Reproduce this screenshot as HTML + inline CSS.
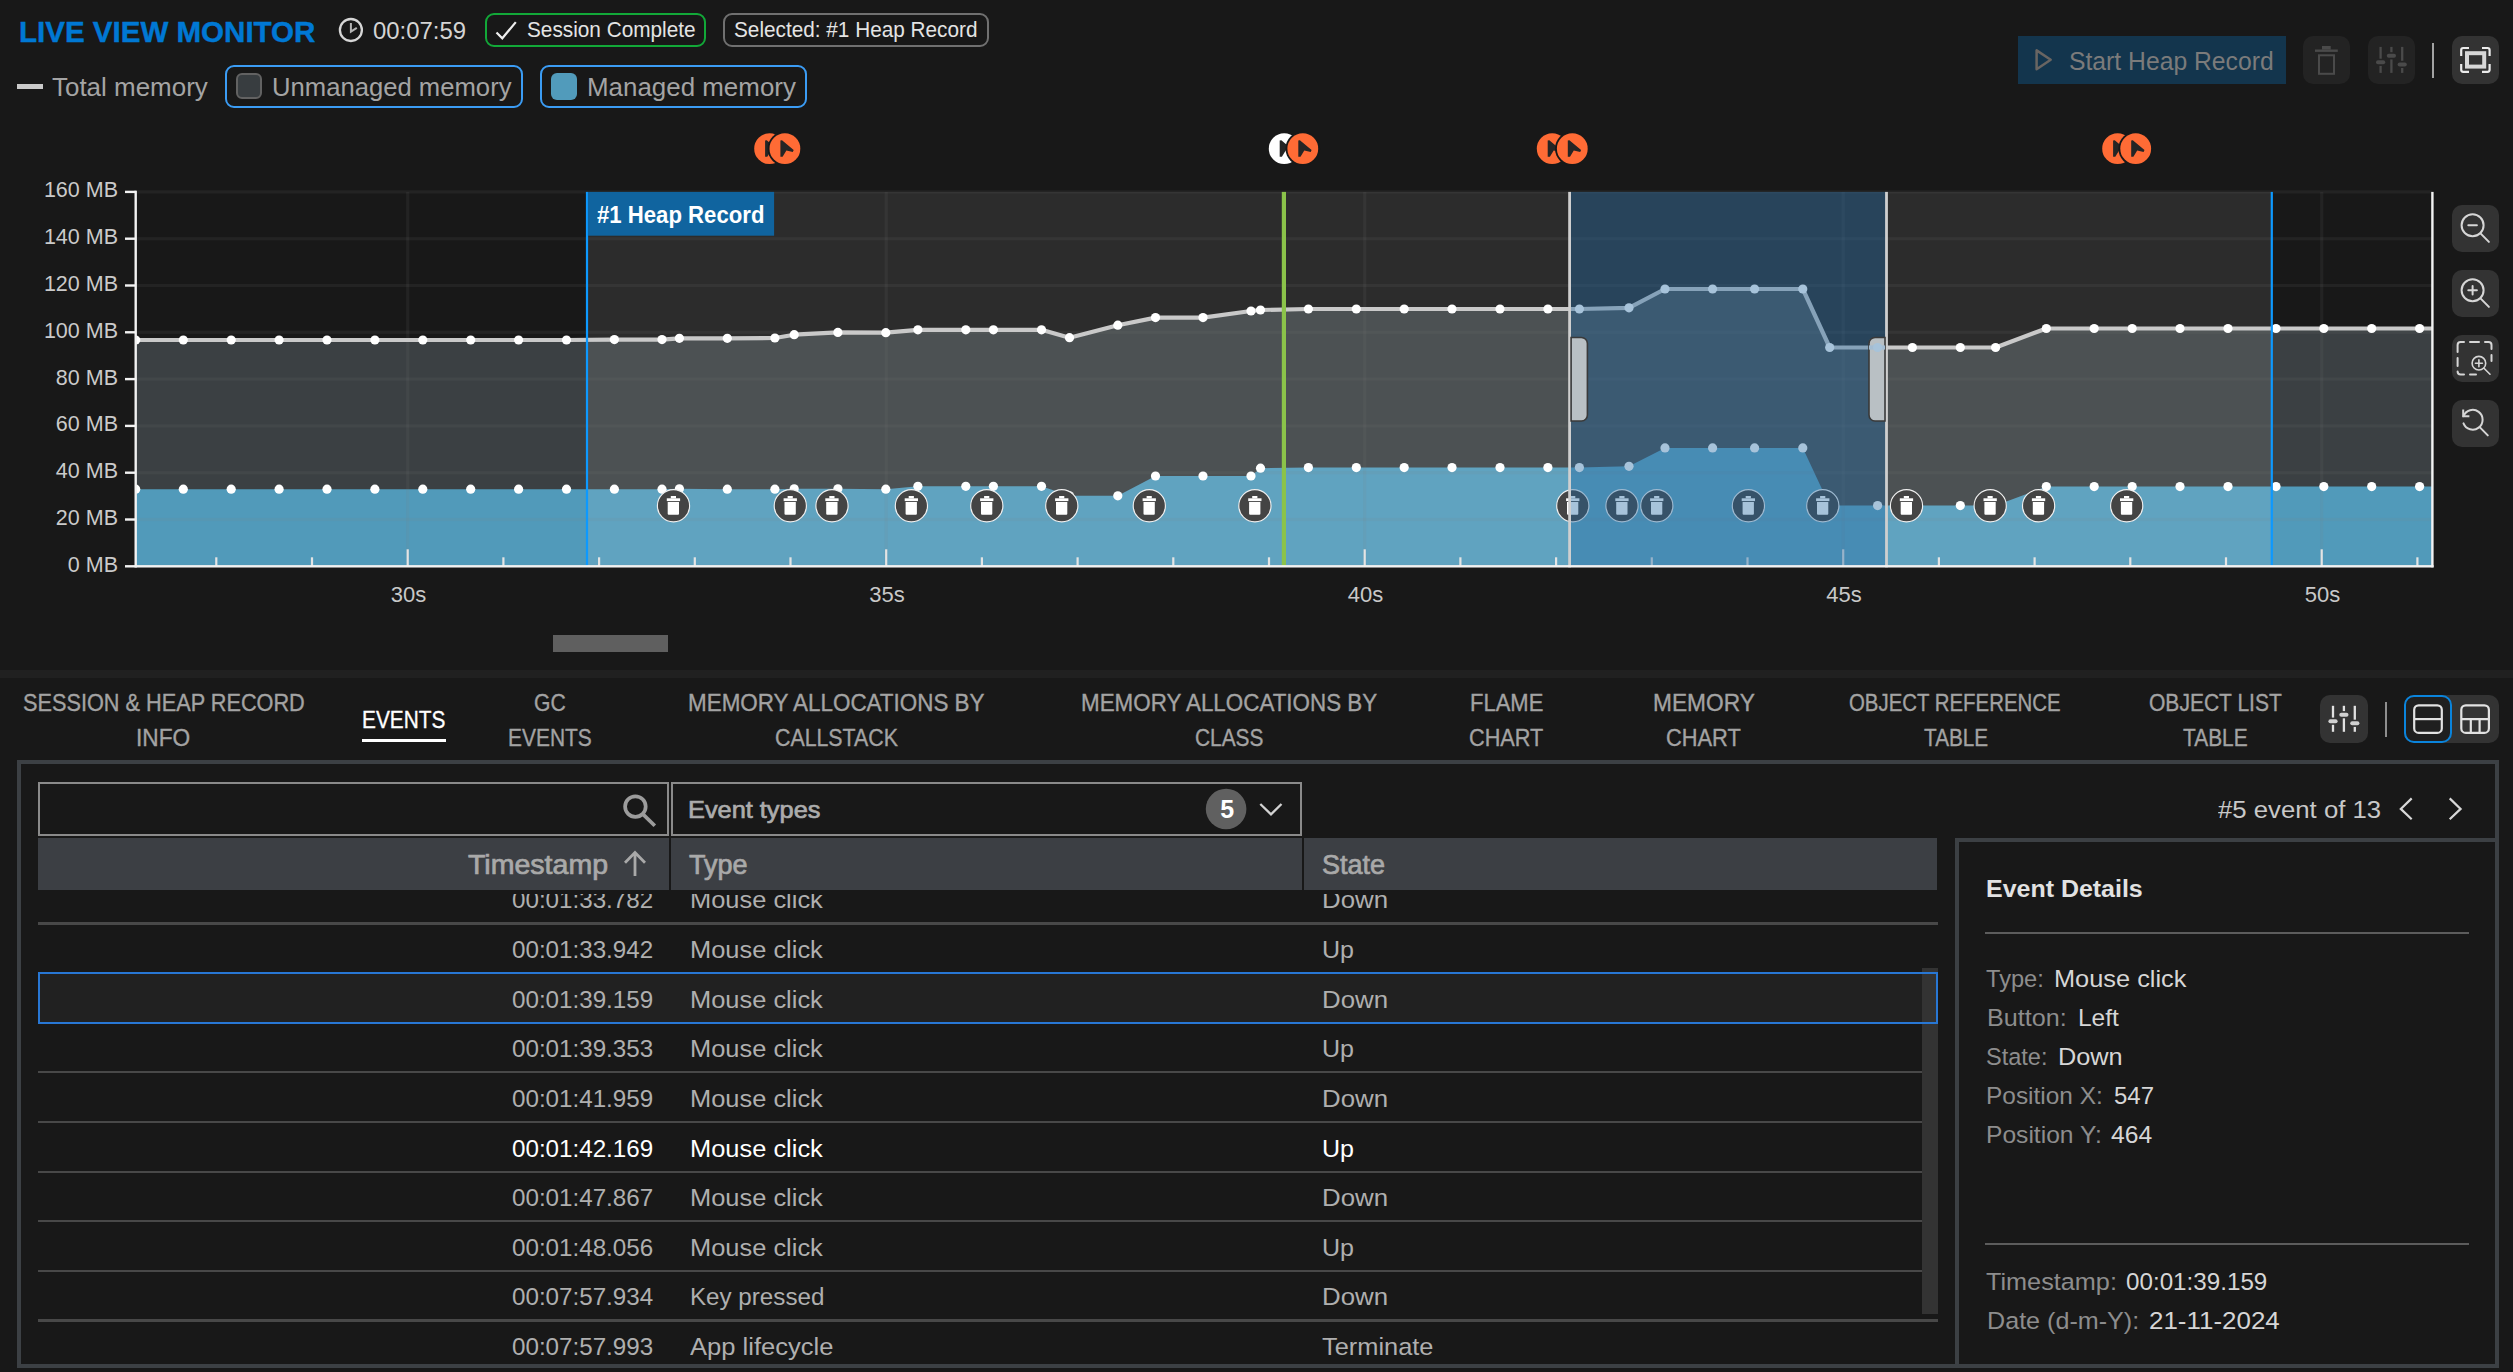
<!DOCTYPE html>
<html><head><meta charset="utf-8"><title>Live View Monitor</title>
<style>
html,body{margin:0;padding:0;background:#181818;}
body{width:2513px;height:1372px;position:relative;overflow:hidden;font-family:"Liberation Sans",sans-serif;}
.t{position:absolute;white-space:nowrap;transform-origin:0 0;}
.b{position:absolute;box-sizing:border-box;}
svg{position:absolute;left:0;top:0;overflow:visible;}
</style></head><body>
<span class="t" style="left:18.90px;top:14.21px;font-size:29.4px;line-height:35px;color:#0078d4;transform:scaleX(1.0047);font-weight:bold;-webkit-text-stroke:0.45px #0078d4;">LIVE VIEW MONITOR</span>
<svg width="2513" height="130"><g fill="none"><circle cx="350.9" cy="30" r="11" stroke="#d6d6d6" stroke-width="2.3"/><path d="M350.9 22.9V31.7L356.8 27.9" stroke="#b4b4b4" stroke-width="2"/></g></svg>
<span class="t" style="left:373.20px;top:16.24px;font-size:24.7px;line-height:30px;color:#d4d4d4;transform:scaleX(0.9682);">00:07:59</span>
<div class="b" style="left:485.2px;top:13.0px;width:221.0px;height:34.0px;background:transparent;border:2.4px solid #12a838;border-radius:9px;"></div>
<svg width="2513" height="130"><path d="M496.5 32.5L502.3 38.3L515.8 22.1" fill="none" stroke="#eeeeee" stroke-width="2.2"/></svg>
<span class="t" style="left:526.60px;top:17.22px;font-size:21.6px;line-height:26px;color:#e4e4e4;transform:scaleX(0.9619);">Session Complete</span>
<div class="b" style="left:723.0px;top:13.0px;width:266.0px;height:34.0px;background:transparent;border:2.4px solid #707070;border-radius:9px;"></div>
<span class="t" style="left:734.10px;top:17.22px;font-size:21.6px;line-height:26px;color:#e4e4e4;transform:scaleX(0.9611);">Selected: #1 Heap Record</span>
<div class="b" style="left:17.0px;top:83.7px;width:26.4px;height:5.0px;background:#cacaca;"></div>
<span class="t" style="left:52.00px;top:72.23px;font-size:25.3px;line-height:30px;color:#a4a4a4;transform:scaleX(1.0260);">Total memory</span>
<div class="b" style="left:225.0px;top:65.0px;width:298.0px;height:43.0px;background:transparent;border:2.4px solid #3b9cf4;border-radius:9px;"></div>
<div class="b" style="left:236.0px;top:73.0px;width:26.0px;height:26.0px;background:#383d40;border:2px solid #626262;border-radius:6px;"></div>
<span class="t" style="left:271.90px;top:72.23px;font-size:25.3px;line-height:30px;color:#a4a4a4;transform:scaleX(1.0139);">Unmanaged memory</span>
<div class="b" style="left:540.0px;top:65.0px;width:267.3px;height:43.0px;background:transparent;border:2.4px solid #3b9cf4;border-radius:9px;"></div>
<div class="b" style="left:550.5px;top:73.0px;width:26.5px;height:26.5px;background:#519bbb;border-radius:6px;"></div>
<span class="t" style="left:586.60px;top:72.23px;font-size:25.3px;line-height:30px;color:#a4a4a4;transform:scaleX(1.0246);">Managed memory</span>
<div class="b" style="left:2017.8px;top:36.0px;width:268.2px;height:48.0px;background:#13354d;"></div>
<svg width="2513" height="130"><path d="M2036.6 50.4V69.2L2050.7 59.8Z" fill="none" stroke="#696562" stroke-width="2.5" stroke-linejoin="round"/></svg>
<span class="t" style="left:2068.60px;top:46.14px;font-size:25px;line-height:30px;color:#7b7b7b;transform:scaleX(0.9887);">Start Heap Record</span>
<div class="b" style="left:2303.0px;top:36.0px;width:47.0px;height:48.0px;background:#232323;border-radius:10px;"></div>
<svg width="2513" height="130"><g fill="none" stroke="#4a4a4a" stroke-width="2"><rect x="2319" y="55.3" width="15" height="18.5"/></g><rect x="2322" y="46" width="8.7" height="3.6" fill="#4a4a4a"/><rect x="2315" y="49.5" width="22.8" height="2.4" fill="#4a4a4a"/></svg>
<div class="b" style="left:2368.0px;top:36.0px;width:47.0px;height:48.0px;background:#232323;border-radius:10px;"></div>
<svg width="2513" height="130"><g><rect x="2379.45" y="46.90" width="2.3" height="11.80" fill="#4a4a4a"/><rect x="2379.45" y="65.90" width="2.3" height="7.00" fill="#4a4a4a"/><rect x="2376.00" y="60.30" width="9.2" height="4" rx="2" fill="#4a4a4a"/><rect x="2390.25" y="46.90" width="2.3" height="5.30" fill="#4a4a4a"/><rect x="2390.25" y="59.40" width="2.3" height="13.50" fill="#4a4a4a"/><rect x="2386.80" y="53.80" width="9.2" height="4" rx="2" fill="#4a4a4a"/><rect x="2401.05" y="46.90" width="2.3" height="13.90" fill="#4a4a4a"/><rect x="2401.05" y="68.00" width="2.3" height="4.90" fill="#4a4a4a"/><rect x="2397.60" y="62.40" width="9.2" height="4" rx="2" fill="#4a4a4a"/></g></svg>
<div class="b" style="left:2431.7px;top:43.0px;width:2.4px;height:35.0px;background:#a2a2a2;"></div>
<div class="b" style="left:2452.0px;top:36.0px;width:47.0px;height:48.0px;background:#333333;border-radius:10px;"></div>
<svg width="2513" height="130"><g fill="none" stroke="#ececec" stroke-width="2.2" stroke-linecap="butt"><path d="M2461.2 56V50a2 2 0 0 1 2-2H2469"/><path d="M2482 48H2487.6a2 2 0 0 1 2 2V56"/><path d="M2461.2 64V69.8a2 2 0 0 0 2 2H2469"/><path d="M2482 71.8H2487.6a2 2 0 0 0 2-2V64"/></g><rect x="2467" y="53.2" width="17.2" height="13.4" fill="none" stroke="#d8d8d8" stroke-width="4"/></svg>
<svg width="2513" height="672" viewBox="0 0 2513 672"><defs><clipPath id="cp"><rect x="135.7" y="185.89999999999998" width="2296.7000000000003" height="380.4"/></clipPath></defs><polygon points="135.7,340.0 183.3,340.0 231.2,340.0 279.1,340.0 327.0,340.0 374.9,340.0 422.8,340.0 470.7,340.0 518.6,340.0 566.5,340.0 614.4,339.6 662.0,339.6 679.4,338.3 727.3,338.3 774.9,338.0 794.2,334.7 837.9,332.4 885.8,332.7 917.9,329.8 965.8,329.8 993.4,329.8 1041.5,329.8 1069.5,337.7 1117.8,325.2 1155.5,317.6 1203.0,317.6 1251.0,311.0 1260.5,310.0 1308.4,309.0 1356.3,309.0 1404.2,309.0 1452.0,309.0 1500.0,309.0 1547.9,309.0 1579.4,309.0 1629.0,307.8 1665.0,289.0 1712.6,289.0 1754.6,289.0 1802.8,289.0 1829.7,347.5 1877.6,347.5 1912.4,347.5 1960.3,347.5 1995.6,347.5 2046.3,328.5 2094.2,328.5 2132.2,328.5 2180.0,328.5 2228.0,328.5 2276.0,328.5 2323.8,328.5 2371.7,328.5 2419.6,328.5 2432.4,328.5 2432.4,566.3 135.7,566.3" fill="#3b4043"/><polygon points="135.7,489.2 183.3,489.2 231.2,489.2 279.1,489.2 327.0,489.2 374.9,489.2 422.8,489.2 470.7,489.2 518.6,489.2 566.5,489.2 614.4,489.2 662.0,489.2 679.4,488.8 727.3,489.2 774.9,489.2 794.2,488.8 837.9,488.8 885.8,489.2 917.9,486.3 965.8,486.3 993.4,486.3 1041.5,486.3 1069.5,495.8 1117.8,495.8 1155.5,476.0 1203.0,476.0 1251.0,476.0 1260.5,468.2 1308.4,467.6 1356.3,467.6 1404.2,467.6 1452.0,467.6 1500.0,467.6 1547.9,467.6 1579.4,467.6 1629.0,466.3 1665.0,447.9 1712.6,447.9 1754.6,447.9 1802.8,447.9 1829.7,505.6 1877.6,505.6 1912.4,505.6 1960.3,505.6 1995.6,505.6 2046.3,486.6 2094.2,486.6 2132.2,486.6 2180.0,486.6 2228.0,486.6 2276.0,486.6 2323.8,486.6 2371.7,486.6 2419.6,486.6 2432.4,486.6 2432.4,566.3 135.7,566.3" fill="#519aba"/><rect x="586.9" y="191.89999999999998" width="1684.7999999999997" height="374.4" fill="rgba(255,255,255,0.09)"/><g fill="rgba(130,130,130,0.11)"><rect x="135.7" y="564.7" width="2296.7000000000003" height="3.2"/><rect x="135.7" y="517.9" width="2296.7000000000003" height="3.2"/><rect x="135.7" y="471.1" width="2296.7000000000003" height="3.2"/><rect x="135.7" y="424.3" width="2296.7000000000003" height="3.2"/><rect x="135.7" y="377.5" width="2296.7000000000003" height="3.2"/><rect x="135.7" y="330.7" width="2296.7000000000003" height="3.2"/><rect x="135.7" y="283.9" width="2296.7000000000003" height="3.2"/><rect x="135.7" y="237.1" width="2296.7000000000003" height="3.2"/><rect x="135.7" y="190.3" width="2296.7000000000003" height="3.2"/><rect x="406.1" y="191.89999999999998" width="3.2" height="374.4"/><rect x="884.6" y="191.89999999999998" width="3.2" height="374.4"/><rect x="1363.1" y="191.89999999999998" width="3.2" height="374.4"/><rect x="1841.6" y="191.89999999999998" width="3.2" height="374.4"/><rect x="2320.1" y="191.89999999999998" width="3.2" height="374.4"/></g><g fill="#e4e4e4"><rect x="215.2" y="557.3" width="2.2" height="9"/><rect x="310.9" y="557.3" width="2.2" height="9"/><rect x="406.6" y="549.3" width="2.2" height="17"/><rect x="502.3" y="557.3" width="2.2" height="9"/><rect x="598.0" y="557.3" width="2.2" height="9"/><rect x="693.7" y="557.3" width="2.2" height="9"/><rect x="789.4" y="557.3" width="2.2" height="9"/><rect x="885.1" y="549.3" width="2.2" height="17"/><rect x="980.8" y="557.3" width="2.2" height="9"/><rect x="1076.5" y="557.3" width="2.2" height="9"/><rect x="1172.2" y="557.3" width="2.2" height="9"/><rect x="1267.9" y="557.3" width="2.2" height="9"/><rect x="1363.6" y="549.3" width="2.2" height="17"/><rect x="1459.3" y="557.3" width="2.2" height="9"/><rect x="1555.0" y="557.3" width="2.2" height="9"/><rect x="1650.7" y="557.3" width="2.2" height="9"/><rect x="1746.4" y="557.3" width="2.2" height="9"/><rect x="1842.1" y="549.3" width="2.2" height="17"/><rect x="1937.8" y="557.3" width="2.2" height="9"/><rect x="2033.5" y="557.3" width="2.2" height="9"/><rect x="2129.2" y="557.3" width="2.2" height="9"/><rect x="2224.9" y="557.3" width="2.2" height="9"/><rect x="2320.6" y="549.3" width="2.2" height="17"/><rect x="2416.3" y="557.3" width="2.2" height="9"/></g><g clip-path="url(#cp)"><polyline points="135.7,340.0 183.3,340.0 231.2,340.0 279.1,340.0 327.0,340.0 374.9,340.0 422.8,340.0 470.7,340.0 518.6,340.0 566.5,340.0 614.4,339.6 662.0,339.6 679.4,338.3 727.3,338.3 774.9,338.0 794.2,334.7 837.9,332.4 885.8,332.7 917.9,329.8 965.8,329.8 993.4,329.8 1041.5,329.8 1069.5,337.7 1117.8,325.2 1155.5,317.6 1203.0,317.6 1251.0,311.0 1260.5,310.0 1308.4,309.0 1356.3,309.0 1404.2,309.0 1452.0,309.0 1500.0,309.0 1547.9,309.0 1579.4,309.0 1629.0,307.8 1665.0,289.0 1712.6,289.0 1754.6,289.0 1802.8,289.0 1829.7,347.5 1877.6,347.5 1912.4,347.5 1960.3,347.5 1995.6,347.5 2046.3,328.5 2094.2,328.5 2132.2,328.5 2180.0,328.5 2228.0,328.5 2276.0,328.5 2323.8,328.5 2371.7,328.5 2419.6,328.5 2432.4,328.5" fill="none" stroke="#c9c9c9" stroke-width="4.2" stroke-linejoin="round"/><g fill="#ffffff"><circle cx="135.7" cy="340.0" r="4.6"/><circle cx="183.3" cy="340.0" r="4.6"/><circle cx="231.2" cy="340.0" r="4.6"/><circle cx="279.1" cy="340.0" r="4.6"/><circle cx="327.0" cy="340.0" r="4.6"/><circle cx="374.9" cy="340.0" r="4.6"/><circle cx="422.8" cy="340.0" r="4.6"/><circle cx="470.7" cy="340.0" r="4.6"/><circle cx="518.6" cy="340.0" r="4.6"/><circle cx="566.5" cy="340.0" r="4.6"/><circle cx="614.4" cy="339.6" r="4.6"/><circle cx="662.0" cy="339.6" r="4.6"/><circle cx="679.4" cy="338.3" r="4.6"/><circle cx="727.3" cy="338.3" r="4.6"/><circle cx="774.9" cy="338.0" r="4.6"/><circle cx="794.2" cy="334.7" r="4.6"/><circle cx="837.9" cy="332.4" r="4.6"/><circle cx="885.8" cy="332.7" r="4.6"/><circle cx="917.9" cy="329.8" r="4.6"/><circle cx="965.8" cy="329.8" r="4.6"/><circle cx="993.4" cy="329.8" r="4.6"/><circle cx="1041.5" cy="329.8" r="4.6"/><circle cx="1069.5" cy="337.7" r="4.6"/><circle cx="1117.8" cy="325.2" r="4.6"/><circle cx="1155.5" cy="317.6" r="4.6"/><circle cx="1203.0" cy="317.6" r="4.6"/><circle cx="1251.0" cy="311.0" r="4.6"/><circle cx="1260.5" cy="310.0" r="4.6"/><circle cx="1308.4" cy="309.0" r="4.6"/><circle cx="1356.3" cy="309.0" r="4.6"/><circle cx="1404.2" cy="309.0" r="4.6"/><circle cx="1452.0" cy="309.0" r="4.6"/><circle cx="1500.0" cy="309.0" r="4.6"/><circle cx="1547.9" cy="309.0" r="4.6"/><circle cx="1579.4" cy="309.0" r="4.6"/><circle cx="1629.0" cy="307.8" r="4.6"/><circle cx="1665.0" cy="289.0" r="4.6"/><circle cx="1712.6" cy="289.0" r="4.6"/><circle cx="1754.6" cy="289.0" r="4.6"/><circle cx="1802.8" cy="289.0" r="4.6"/><circle cx="1829.7" cy="347.5" r="4.6"/><circle cx="1877.6" cy="347.5" r="4.6"/><circle cx="1912.4" cy="347.5" r="4.6"/><circle cx="1960.3" cy="347.5" r="4.6"/><circle cx="1995.6" cy="347.5" r="4.6"/><circle cx="2046.3" cy="328.5" r="4.6"/><circle cx="2094.2" cy="328.5" r="4.6"/><circle cx="2132.2" cy="328.5" r="4.6"/><circle cx="2180.0" cy="328.5" r="4.6"/><circle cx="2228.0" cy="328.5" r="4.6"/><circle cx="2276.0" cy="328.5" r="4.6"/><circle cx="2323.8" cy="328.5" r="4.6"/><circle cx="2371.7" cy="328.5" r="4.6"/><circle cx="2419.6" cy="328.5" r="4.6"/><circle cx="135.7" cy="489.2" r="4.6"/><circle cx="183.3" cy="489.2" r="4.6"/><circle cx="231.2" cy="489.2" r="4.6"/><circle cx="279.1" cy="489.2" r="4.6"/><circle cx="327.0" cy="489.2" r="4.6"/><circle cx="374.9" cy="489.2" r="4.6"/><circle cx="422.8" cy="489.2" r="4.6"/><circle cx="470.7" cy="489.2" r="4.6"/><circle cx="518.6" cy="489.2" r="4.6"/><circle cx="566.5" cy="489.2" r="4.6"/><circle cx="614.4" cy="489.2" r="4.6"/><circle cx="662.0" cy="489.2" r="4.6"/><circle cx="679.4" cy="488.8" r="4.6"/><circle cx="727.3" cy="489.2" r="4.6"/><circle cx="774.9" cy="489.2" r="4.6"/><circle cx="794.2" cy="488.8" r="4.6"/><circle cx="837.9" cy="488.8" r="4.6"/><circle cx="885.8" cy="489.2" r="4.6"/><circle cx="917.9" cy="486.3" r="4.6"/><circle cx="965.8" cy="486.3" r="4.6"/><circle cx="993.4" cy="486.3" r="4.6"/><circle cx="1041.5" cy="486.3" r="4.6"/><circle cx="1069.5" cy="495.8" r="4.6"/><circle cx="1117.8" cy="495.8" r="4.6"/><circle cx="1155.5" cy="476.0" r="4.6"/><circle cx="1203.0" cy="476.0" r="4.6"/><circle cx="1251.0" cy="476.0" r="4.6"/><circle cx="1260.5" cy="468.2" r="4.6"/><circle cx="1308.4" cy="467.6" r="4.6"/><circle cx="1356.3" cy="467.6" r="4.6"/><circle cx="1404.2" cy="467.6" r="4.6"/><circle cx="1452.0" cy="467.6" r="4.6"/><circle cx="1500.0" cy="467.6" r="4.6"/><circle cx="1547.9" cy="467.6" r="4.6"/><circle cx="1579.4" cy="467.6" r="4.6"/><circle cx="1629.0" cy="466.3" r="4.6"/><circle cx="1665.0" cy="447.9" r="4.6"/><circle cx="1712.6" cy="447.9" r="4.6"/><circle cx="1754.6" cy="447.9" r="4.6"/><circle cx="1802.8" cy="447.9" r="4.6"/><circle cx="1829.7" cy="505.6" r="4.6"/><circle cx="1877.6" cy="505.6" r="4.6"/><circle cx="1912.4" cy="505.6" r="4.6"/><circle cx="1960.3" cy="505.6" r="4.6"/><circle cx="1995.6" cy="505.6" r="4.6"/><circle cx="2046.3" cy="486.6" r="4.6"/><circle cx="2094.2" cy="486.6" r="4.6"/><circle cx="2132.2" cy="486.6" r="4.6"/><circle cx="2180.0" cy="486.6" r="4.6"/><circle cx="2228.0" cy="486.6" r="4.6"/><circle cx="2276.0" cy="486.6" r="4.6"/><circle cx="2323.8" cy="486.6" r="4.6"/><circle cx="2371.7" cy="486.6" r="4.6"/><circle cx="2419.6" cy="486.6" r="4.6"/></g></g><g transform="translate(673.5,505.8)"><circle r="16.1" fill="#444444" stroke="#f0f0f0" stroke-width="1.15"/><g fill="#ffffff"><rect x="-2.7" y="-9.8" width="5.2" height="2.4"/><rect x="-6.7" y="-7.5" width="13.3" height="2.8"/><path d="M-5.8 -3.7H5.5V8a1 1 0 0 1 -1 1H-4.8a1 1 0 0 1 -1 -1Z"/></g></g><g transform="translate(790.3,505.8)"><circle r="16.1" fill="#444444" stroke="#f0f0f0" stroke-width="1.15"/><g fill="#ffffff"><rect x="-2.7" y="-9.8" width="5.2" height="2.4"/><rect x="-6.7" y="-7.5" width="13.3" height="2.8"/><path d="M-5.8 -3.7H5.5V8a1 1 0 0 1 -1 1H-4.8a1 1 0 0 1 -1 -1Z"/></g></g><g transform="translate(832.0,505.8)"><circle r="16.1" fill="#444444" stroke="#f0f0f0" stroke-width="1.15"/><g fill="#ffffff"><rect x="-2.7" y="-9.8" width="5.2" height="2.4"/><rect x="-6.7" y="-7.5" width="13.3" height="2.8"/><path d="M-5.8 -3.7H5.5V8a1 1 0 0 1 -1 1H-4.8a1 1 0 0 1 -1 -1Z"/></g></g><g transform="translate(911.4,505.8)"><circle r="16.1" fill="#444444" stroke="#f0f0f0" stroke-width="1.15"/><g fill="#ffffff"><rect x="-2.7" y="-9.8" width="5.2" height="2.4"/><rect x="-6.7" y="-7.5" width="13.3" height="2.8"/><path d="M-5.8 -3.7H5.5V8a1 1 0 0 1 -1 1H-4.8a1 1 0 0 1 -1 -1Z"/></g></g><g transform="translate(986.8,505.8)"><circle r="16.1" fill="#444444" stroke="#f0f0f0" stroke-width="1.15"/><g fill="#ffffff"><rect x="-2.7" y="-9.8" width="5.2" height="2.4"/><rect x="-6.7" y="-7.5" width="13.3" height="2.8"/><path d="M-5.8 -3.7H5.5V8a1 1 0 0 1 -1 1H-4.8a1 1 0 0 1 -1 -1Z"/></g></g><g transform="translate(1061.8,505.8)"><circle r="16.1" fill="#444444" stroke="#f0f0f0" stroke-width="1.15"/><g fill="#ffffff"><rect x="-2.7" y="-9.8" width="5.2" height="2.4"/><rect x="-6.7" y="-7.5" width="13.3" height="2.8"/><path d="M-5.8 -3.7H5.5V8a1 1 0 0 1 -1 1H-4.8a1 1 0 0 1 -1 -1Z"/></g></g><g transform="translate(1149.3,505.8)"><circle r="16.1" fill="#444444" stroke="#f0f0f0" stroke-width="1.15"/><g fill="#ffffff"><rect x="-2.7" y="-9.8" width="5.2" height="2.4"/><rect x="-6.7" y="-7.5" width="13.3" height="2.8"/><path d="M-5.8 -3.7H5.5V8a1 1 0 0 1 -1 1H-4.8a1 1 0 0 1 -1 -1Z"/></g></g><g transform="translate(1254.9,505.8)"><circle r="16.1" fill="#444444" stroke="#f0f0f0" stroke-width="1.15"/><g fill="#ffffff"><rect x="-2.7" y="-9.8" width="5.2" height="2.4"/><rect x="-6.7" y="-7.5" width="13.3" height="2.8"/><path d="M-5.8 -3.7H5.5V8a1 1 0 0 1 -1 1H-4.8a1 1 0 0 1 -1 -1Z"/></g></g><g transform="translate(1572.8,505.8)"><circle r="16.1" fill="#444444" stroke="#f0f0f0" stroke-width="1.15"/><g fill="#ffffff"><rect x="-2.7" y="-9.8" width="5.2" height="2.4"/><rect x="-6.7" y="-7.5" width="13.3" height="2.8"/><path d="M-5.8 -3.7H5.5V8a1 1 0 0 1 -1 1H-4.8a1 1 0 0 1 -1 -1Z"/></g></g><g transform="translate(1622.0,505.8)"><circle r="16.1" fill="#444444" stroke="#f0f0f0" stroke-width="1.15"/><g fill="#ffffff"><rect x="-2.7" y="-9.8" width="5.2" height="2.4"/><rect x="-6.7" y="-7.5" width="13.3" height="2.8"/><path d="M-5.8 -3.7H5.5V8a1 1 0 0 1 -1 1H-4.8a1 1 0 0 1 -1 -1Z"/></g></g><g transform="translate(1656.8,505.8)"><circle r="16.1" fill="#444444" stroke="#f0f0f0" stroke-width="1.15"/><g fill="#ffffff"><rect x="-2.7" y="-9.8" width="5.2" height="2.4"/><rect x="-6.7" y="-7.5" width="13.3" height="2.8"/><path d="M-5.8 -3.7H5.5V8a1 1 0 0 1 -1 1H-4.8a1 1 0 0 1 -1 -1Z"/></g></g><g transform="translate(1748.4,505.8)"><circle r="16.1" fill="#444444" stroke="#f0f0f0" stroke-width="1.15"/><g fill="#ffffff"><rect x="-2.7" y="-9.8" width="5.2" height="2.4"/><rect x="-6.7" y="-7.5" width="13.3" height="2.8"/><path d="M-5.8 -3.7H5.5V8a1 1 0 0 1 -1 1H-4.8a1 1 0 0 1 -1 -1Z"/></g></g><g transform="translate(1822.8,505.8)"><circle r="16.1" fill="#444444" stroke="#f0f0f0" stroke-width="1.15"/><g fill="#ffffff"><rect x="-2.7" y="-9.8" width="5.2" height="2.4"/><rect x="-6.7" y="-7.5" width="13.3" height="2.8"/><path d="M-5.8 -3.7H5.5V8a1 1 0 0 1 -1 1H-4.8a1 1 0 0 1 -1 -1Z"/></g></g><g transform="translate(1906.5,505.8)"><circle r="16.1" fill="#444444" stroke="#f0f0f0" stroke-width="1.15"/><g fill="#ffffff"><rect x="-2.7" y="-9.8" width="5.2" height="2.4"/><rect x="-6.7" y="-7.5" width="13.3" height="2.8"/><path d="M-5.8 -3.7H5.5V8a1 1 0 0 1 -1 1H-4.8a1 1 0 0 1 -1 -1Z"/></g></g><g transform="translate(1990.2,505.8)"><circle r="16.1" fill="#444444" stroke="#f0f0f0" stroke-width="1.15"/><g fill="#ffffff"><rect x="-2.7" y="-9.8" width="5.2" height="2.4"/><rect x="-6.7" y="-7.5" width="13.3" height="2.8"/><path d="M-5.8 -3.7H5.5V8a1 1 0 0 1 -1 1H-4.8a1 1 0 0 1 -1 -1Z"/></g></g><g transform="translate(2038.6,505.8)"><circle r="16.1" fill="#444444" stroke="#f0f0f0" stroke-width="1.15"/><g fill="#ffffff"><rect x="-2.7" y="-9.8" width="5.2" height="2.4"/><rect x="-6.7" y="-7.5" width="13.3" height="2.8"/><path d="M-5.8 -3.7H5.5V8a1 1 0 0 1 -1 1H-4.8a1 1 0 0 1 -1 -1Z"/></g></g><g transform="translate(2126.7,505.8)"><circle r="16.1" fill="#444444" stroke="#f0f0f0" stroke-width="1.15"/><g fill="#ffffff"><rect x="-2.7" y="-9.8" width="5.2" height="2.4"/><rect x="-6.7" y="-7.5" width="13.3" height="2.8"/><path d="M-5.8 -3.7H5.5V8a1 1 0 0 1 -1 1H-4.8a1 1 0 0 1 -1 -1Z"/></g></g><rect x="1281.8" y="191.89999999999998" width="4.2" height="374.4" fill="#8bc34a"/><rect x="585.9" y="191.89999999999998" width="2.2" height="374.4" fill="#0d99ff"/><rect x="2270.7" y="191.89999999999998" width="2.2" height="374.4" fill="#0d99ff"/><rect x="587.9" y="191.89999999999998" width="186.2" height="43.8" fill="#10649f"/><rect x="1569.6" y="191.89999999999998" width="316.9000000000001" height="374.4" fill="rgba(34,105,162,0.40)"/><rect x="1568.2" y="191.89999999999998" width="2.8" height="375.4" fill="#cfcfcf"/><rect x="1885.1" y="191.89999999999998" width="2.8" height="375.4" fill="#cfcfcf"/><path d="M1571.1 337.5H1581.4a6 6 0 0 1 6 6V415a6 6 0 0 1 -6 6H1571.1Z" fill="#b9c0c4" stroke="#3a3a3a" stroke-width="1.6"/><path d="M1885.0 337.5H1875a6 6 0 0 0 -6 6V415a6 6 0 0 0 6 6H1885.0Z" fill="#b9c0c4" stroke="#3a3a3a" stroke-width="1.6"/><rect x="1869" y="345.4" width="16" height="4.2" fill="#a4bdd2"/><circle cx="1877.6" cy="347.5" r="4.6" fill="#a7c3da"/><g fill="#f2f2f2"><rect x="134.5" y="190.7" width="2.4" height="376.8"/><rect x="124.99999999999999" y="565.1" width="2308.6000000000004" height="2.4"/><rect x="2431.2000000000003" y="191.9" width="2.4" height="375.4"/><rect x="124.99999999999999" y="518.3" width="10.7" height="2.4"/><rect x="124.99999999999999" y="471.5" width="10.7" height="2.4"/><rect x="124.99999999999999" y="424.7" width="10.7" height="2.4"/><rect x="124.99999999999999" y="377.9" width="10.7" height="2.4"/><rect x="124.99999999999999" y="331.1" width="10.7" height="2.4"/><rect x="124.99999999999999" y="284.3" width="10.7" height="2.4"/><rect x="124.99999999999999" y="237.5" width="10.7" height="2.4"/><rect x="124.99999999999999" y="190.7" width="10.7" height="2.4"/></g><g><circle cx="769.6" cy="148.7" r="15.4" fill="#ff6b35"/><path transform="translate(769.6,148.7)" d="M-4.5 -8.3V8.1H-2.3L1.5 1.9L7.9 3.2L8.8 1.2L-2.9 -8.5Z" fill="#252525"/><circle cx="784.9" cy="148.7" r="17.3" fill="#181818"/><circle cx="784.9" cy="148.7" r="15.4" fill="#ff6b35"/><path transform="translate(784.9,148.7)" d="M-4.5 -8.3V8.1H-2.3L1.5 1.9L7.9 3.2L8.8 1.2L-2.9 -8.5Z" fill="#252525"/></g><g><circle cx="1284.2" cy="148.7" r="15.4" fill="#ffffff"/><path transform="translate(1284.2,148.7)" d="M-4.5 -8.3V8.1H-2.3L1.5 1.9L7.9 3.2L8.8 1.2L-2.9 -8.5Z" fill="#252525"/><circle cx="1302.8" cy="148.7" r="17.3" fill="#181818"/><circle cx="1302.8" cy="148.7" r="15.4" fill="#ff6b35"/><path transform="translate(1302.8,148.7)" d="M-4.5 -8.3V8.1H-2.3L1.5 1.9L7.9 3.2L8.8 1.2L-2.9 -8.5Z" fill="#252525"/></g><g><circle cx="1552.2" cy="148.7" r="15.4" fill="#ff6b35"/><path transform="translate(1552.2,148.7)" d="M-4.5 -8.3V8.1H-2.3L1.5 1.9L7.9 3.2L8.8 1.2L-2.9 -8.5Z" fill="#252525"/><circle cx="1572.3" cy="148.7" r="17.3" fill="#181818"/><circle cx="1572.3" cy="148.7" r="15.4" fill="#ff6b35"/><path transform="translate(1572.3,148.7)" d="M-4.5 -8.3V8.1H-2.3L1.5 1.9L7.9 3.2L8.8 1.2L-2.9 -8.5Z" fill="#252525"/></g><g><circle cx="2117.6" cy="148.7" r="15.4" fill="#ff6b35"/><path transform="translate(2117.6,148.7)" d="M-4.5 -8.3V8.1H-2.3L1.5 1.9L7.9 3.2L8.8 1.2L-2.9 -8.5Z" fill="#252525"/><circle cx="2135.7" cy="148.7" r="17.3" fill="#181818"/><circle cx="2135.7" cy="148.7" r="15.4" fill="#ff6b35"/><path transform="translate(2135.7,148.7)" d="M-4.5 -8.3V8.1H-2.3L1.5 1.9L7.9 3.2L8.8 1.2L-2.9 -8.5Z" fill="#252525"/></g></svg>
<span class="t" style="left:67.82px;top:551.85px;font-size:21.5px;line-height:26px;color:#cacaca;">0 MB</span>
<span class="t" style="left:55.87px;top:505.05px;font-size:21.5px;line-height:26px;color:#cacaca;">20 MB</span>
<span class="t" style="left:55.87px;top:458.25px;font-size:21.5px;line-height:26px;color:#cacaca;">40 MB</span>
<span class="t" style="left:55.87px;top:411.45px;font-size:21.5px;line-height:26px;color:#cacaca;">60 MB</span>
<span class="t" style="left:55.87px;top:364.65px;font-size:21.5px;line-height:26px;color:#cacaca;">80 MB</span>
<span class="t" style="left:43.91px;top:317.85px;font-size:21.5px;line-height:26px;color:#cacaca;">100 MB</span>
<span class="t" style="left:43.91px;top:271.05px;font-size:21.5px;line-height:26px;color:#cacaca;">120 MB</span>
<span class="t" style="left:43.91px;top:224.25px;font-size:21.5px;line-height:26px;color:#cacaca;">140 MB</span>
<span class="t" style="left:43.91px;top:177.45px;font-size:21.5px;line-height:26px;color:#cacaca;">160 MB</span>
<span class="t" style="left:390.76px;top:582.38px;font-size:22px;line-height:26px;color:#c8c8c8;">30s</span>
<span class="t" style="left:869.26px;top:582.38px;font-size:22px;line-height:26px;color:#c8c8c8;">35s</span>
<span class="t" style="left:1347.76px;top:582.38px;font-size:22px;line-height:26px;color:#c8c8c8;">40s</span>
<span class="t" style="left:1826.26px;top:582.38px;font-size:22px;line-height:26px;color:#c8c8c8;">45s</span>
<span class="t" style="left:2304.76px;top:582.38px;font-size:22px;line-height:26px;color:#c8c8c8;">50s</span>
<span class="t" style="left:596.80px;top:201.09px;font-size:23.7px;line-height:28px;color:#ffffff;transform:scaleX(0.9350);font-weight:bold;">#1 Heap Record</span>
<div class="b" style="left:553.0px;top:634.5px;width:115.0px;height:17.5px;background:#5f5f5f;"></div>
<div class="b" style="left:2452.0px;top:205.0px;width:47.0px;height:47.0px;background:#333333;border-radius:10px;"></div>
<div class="b" style="left:2452.0px;top:270.0px;width:47.0px;height:47.0px;background:#333333;border-radius:10px;"></div>
<div class="b" style="left:2452.0px;top:334.5px;width:47.0px;height:47.0px;background:#333333;border-radius:10px;"></div>
<div class="b" style="left:2452.0px;top:399.5px;width:47.0px;height:47.0px;background:#333333;border-radius:10px;"></div>
<svg width="2513" height="672"><g fill="none" stroke="#d6d6d6" stroke-width="2" stroke-linecap="round"><circle cx="2472.6" cy="225.3" r="11"/><path d="M2480.5 233.4L2488.9 241.9M2468.3 225.3H2476.9"/><circle cx="2472.6" cy="290.3" r="11"/><path d="M2480.5 298.4L2488.9 306.9M2468.3 290.3H2476.9M2472.6 286V294.6"/><path d="M2457.6 352V345a3 3 0 0 1 3-3H2464M2470 342H2479M2485 342H2488.5a3 3 0 0 1 3 3V349M2491.5 355V361M2457.6 358V366M2457.6 371.5a3 3 0 0 0 3 3H2464M2470 374.5H2476"/><g stroke-width="1.6"><circle cx="2478.9" cy="363.2" r="6.8"/><path d="M2484 368.3L2490 374.2M2475.4 363.2H2482.4M2478.9 359.7V366.7"/></g><path d="M2463.5 416.1A9.9 9.9 0 1 1 2463.5 423.4"/><path d="M2479.7 427.1L2487.8 435.4"/><path d="M2463.2 409.6V416.2H2469.4" stroke-linecap="butt"/></g></svg>
<div class="b" style="left:0.0px;top:670.0px;width:2513.0px;height:8.0px;background:#202020;"></div>
<span class="t" style="left:22.60px;top:687.98px;font-size:24px;line-height:29px;color:#a3a3a3;transform:scaleX(0.9042);-webkit-text-stroke:0.35px #a3a3a3;">SESSION &amp; HEAP RECORD</span>
<span class="t" style="left:136.40px;top:723.08px;font-size:24px;line-height:29px;color:#a3a3a3;transform:scaleX(0.9453);-webkit-text-stroke:0.35px #a3a3a3;">INFO</span>
<span class="t" style="left:362.00px;top:705.38px;font-size:24px;line-height:29px;color:#ffffff;transform:scaleX(0.8675);-webkit-text-stroke:0.35px #ffffff;">EVENTS</span>
<span class="t" style="left:534.00px;top:687.98px;font-size:24px;line-height:29px;color:#a3a3a3;transform:scaleX(0.8806);-webkit-text-stroke:0.35px #a3a3a3;">GC</span>
<span class="t" style="left:508.00px;top:723.08px;font-size:24px;line-height:29px;color:#a3a3a3;transform:scaleX(0.8727);-webkit-text-stroke:0.35px #a3a3a3;">EVENTS</span>
<span class="t" style="left:688.00px;top:687.98px;font-size:24px;line-height:29px;color:#a3a3a3;transform:scaleX(0.9341);-webkit-text-stroke:0.35px #a3a3a3;">MEMORY ALLOCATIONS BY</span>
<span class="t" style="left:774.80px;top:723.08px;font-size:24px;line-height:29px;color:#a3a3a3;transform:scaleX(0.8889);-webkit-text-stroke:0.35px #a3a3a3;">CALLSTACK</span>
<span class="t" style="left:1080.70px;top:687.98px;font-size:24px;line-height:29px;color:#a3a3a3;transform:scaleX(0.9331);-webkit-text-stroke:0.35px #a3a3a3;">MEMORY ALLOCATIONS BY</span>
<span class="t" style="left:1194.60px;top:723.08px;font-size:24px;line-height:29px;color:#a3a3a3;transform:scaleX(0.8692);-webkit-text-stroke:0.35px #a3a3a3;">CLASS</span>
<span class="t" style="left:1469.60px;top:687.98px;font-size:24px;line-height:29px;color:#a3a3a3;transform:scaleX(0.9161);-webkit-text-stroke:0.35px #a3a3a3;">FLAME</span>
<span class="t" style="left:1468.60px;top:723.08px;font-size:24px;line-height:29px;color:#a3a3a3;transform:scaleX(0.9036);-webkit-text-stroke:0.35px #a3a3a3;">CHART</span>
<span class="t" style="left:1652.70px;top:687.98px;font-size:24px;line-height:29px;color:#a3a3a3;transform:scaleX(0.9464);-webkit-text-stroke:0.35px #a3a3a3;">MEMORY</span>
<span class="t" style="left:1665.70px;top:723.08px;font-size:24px;line-height:29px;color:#a3a3a3;transform:scaleX(0.9097);-webkit-text-stroke:0.35px #a3a3a3;">CHART</span>
<span class="t" style="left:1848.80px;top:687.98px;font-size:24px;line-height:29px;color:#a3a3a3;transform:scaleX(0.8500);-webkit-text-stroke:0.35px #a3a3a3;">OBJECT REFERENCE</span>
<span class="t" style="left:1923.50px;top:723.08px;font-size:24px;line-height:29px;color:#a3a3a3;transform:scaleX(0.8646);-webkit-text-stroke:0.35px #a3a3a3;">TABLE</span>
<span class="t" style="left:2149.20px;top:687.98px;font-size:24px;line-height:29px;color:#a3a3a3;transform:scaleX(0.8761);-webkit-text-stroke:0.35px #a3a3a3;">OBJECT LIST</span>
<span class="t" style="left:2183.30px;top:723.08px;font-size:24px;line-height:29px;color:#a3a3a3;transform:scaleX(0.8713);-webkit-text-stroke:0.35px #a3a3a3;">TABLE</span>
<div class="b" style="left:362.0px;top:739.0px;width:84.0px;height:2.6px;background:#ffffff;"></div>
<div class="b" style="left:2320.0px;top:695.0px;width:48.0px;height:48.0px;background:#333333;border-radius:10px;"></div>
<svg width="2513" height="1372"><g><rect x="2331.85" y="705.80" width="2.3" height="11.80" fill="#e0e0e0"/><rect x="2331.85" y="724.80" width="2.3" height="7.00" fill="#e0e0e0"/><rect x="2328.40" y="719.20" width="9.2" height="4" rx="2" fill="#d0d0d0"/><rect x="2342.75" y="705.80" width="2.3" height="5.30" fill="#e0e0e0"/><rect x="2342.75" y="718.30" width="2.3" height="13.50" fill="#e0e0e0"/><rect x="2339.30" y="712.70" width="9.2" height="4" rx="2" fill="#d0d0d0"/><rect x="2353.65" y="705.80" width="2.3" height="13.90" fill="#e0e0e0"/><rect x="2353.65" y="726.90" width="2.3" height="4.90" fill="#e0e0e0"/><rect x="2350.20" y="721.30" width="9.2" height="4" rx="2" fill="#d0d0d0"/></g></svg>
<div class="b" style="left:2384.7px;top:702.0px;width:2.4px;height:35.0px;background:#8e8e8e;"></div>
<div class="b" style="left:2404.0px;top:695.0px;width:95.0px;height:48.0px;background:#333333;border-radius:10px;"></div>
<div class="b" style="left:2404.0px;top:695.0px;width:48.0px;height:48.0px;background:#1f1f1f;border:2.4px solid #0a84dc;border-radius:10px;"></div>
<svg width="2513" height="1372"><g fill="none" stroke="#e2e2e2" stroke-width="2.2"><rect x="2414.2" y="705.3" width="27.6" height="27.6" rx="4.5"/><path d="M2414.2 719.1H2441.8"/><rect x="2461.3" y="705.3" width="27.6" height="27.6" rx="4.5"/><path d="M2461.3 719.1H2488.9M2470.8 719.1V732.9M2479.6 719.1V732.9"/></g></svg>
<div class="b" style="left:17.0px;top:760.0px;width:2482.0px;height:608.0px;background:transparent;border:4.1px solid #3c4044;"></div>
<div class="b" style="left:38.0px;top:782.0px;width:631.0px;height:54.0px;background:transparent;border:2.1px solid #8a8a8a;"></div>
<svg width="2513" height="1372"><g fill="none" stroke="#9c9c9c" stroke-width="3.7"><circle cx="635.4" cy="806.6" r="10.3"/><path d="M642.6 813.9L654.8 825.8" stroke-linecap="butt"/></g></svg>
<div class="b" style="left:671.2px;top:782.0px;width:631.0px;height:54.0px;background:transparent;border:2.1px solid #8a8a8a;"></div>
<span class="t" style="left:688.00px;top:794.68px;font-size:24.3px;line-height:29px;color:#acacac;transform:scaleX(1.0428);-webkit-text-stroke:0.7px #acacac;">Event types</span>
<svg width="2513" height="1372"><circle cx="1226.1" cy="809" r="20.3" fill="#606060"/><path d="M1260.3 804L1271 814.4L1281.5 804" fill="none" stroke="#d2d2d2" stroke-width="2.3"/></svg>
<span class="t" style="left:1220.20px;top:793.64px;font-size:25px;line-height:30px;color:#ffffff;font-weight:bold;">5</span>
<span class="t" style="left:2218.00px;top:794.91px;font-size:24.8px;line-height:30px;color:#c8c8c8;transform:scaleX(1.0383);">#5 event of 13</span>
<svg width="2513" height="1372"><g fill="none" stroke="#d8d8d8" stroke-width="2.2"><path d="M2411.7 798.4L2400.8 808.9L2411.7 819.3"/><path d="M2449.7 798.4L2460.6 808.9L2449.7 819.3"/></g></svg>
<div class="b" style="left:38.0px;top:837.8px;width:631.0px;height:52.0px;background:#3c3f44;"></div>
<div class="b" style="left:671.0px;top:837.8px;width:631.2px;height:52.0px;background:#3c3f44;"></div>
<div class="b" style="left:1303.8px;top:837.8px;width:633.7px;height:52.0px;background:#3c3f44;"></div>
<span class="t" style="left:468.00px;top:849.44px;font-size:27px;line-height:32px;color:#a9a9a9;transform:scaleX(1.0565);-webkit-text-stroke:0.7px #a9a9a9;">Timestamp</span>
<svg width="2513" height="1372"><path d="M635 876V852.5M625 862.8L635 852.6L645 862.8" fill="none" stroke="#a9a9a9" stroke-width="2.8"/></svg>
<span class="t" style="left:689.00px;top:849.44px;font-size:27px;line-height:32px;color:#a9a9a9;-webkit-text-stroke:0.7px #a9a9a9;">Type</span>
<span class="t" style="left:1322.00px;top:849.44px;font-size:27px;line-height:32px;color:#a9a9a9;-webkit-text-stroke:0.7px #a9a9a9;">State</span>
<div class="b" style="left:0;top:893.6px;width:1950px;height:470.4px;overflow:hidden;"><div class="b" style="left:0;top:-893.6px;width:1950px;height:1372px;">
<div class="b" style="left:38.0px;top:922.4px;width:1899.5px;height:2.2px;background:#484848;"></div>
<span class="t" style="left:511.90px;top:885.41px;font-size:24.8px;line-height:30px;color:#afafaf;transform:scaleX(0.9751);">00:01:33.782</span>
<span class="t" style="left:689.60px;top:885.41px;font-size:24.8px;line-height:30px;color:#afafaf;transform:scaleX(1.0254);">Mouse click</span>
<span class="t" style="left:1322.00px;top:885.41px;font-size:24.8px;line-height:30px;color:#afafaf;transform:scaleX(1.0408);">Down</span>
<span class="t" style="left:511.90px;top:935.03px;font-size:24.8px;line-height:30px;color:#afafaf;transform:scaleX(0.9751);">00:01:33.942</span>
<span class="t" style="left:689.60px;top:935.03px;font-size:24.8px;line-height:30px;color:#afafaf;transform:scaleX(1.0254);">Mouse click</span>
<span class="t" style="left:1322.00px;top:935.03px;font-size:24.8px;line-height:30px;color:#afafaf;transform:scaleX(1.0096);">Up</span>
<div class="b" style="left:38.0px;top:972.0px;width:1899.5px;height:51.8px;background:#212121;"></div>
<span class="t" style="left:511.90px;top:984.65px;font-size:24.8px;line-height:30px;color:#afafaf;transform:scaleX(0.9751);">00:01:39.159</span>
<span class="t" style="left:689.60px;top:984.65px;font-size:24.8px;line-height:30px;color:#afafaf;transform:scaleX(1.0254);">Mouse click</span>
<span class="t" style="left:1322.00px;top:984.65px;font-size:24.8px;line-height:30px;color:#afafaf;transform:scaleX(1.0408);">Down</span>
<div class="b" style="left:38.0px;top:1071.3px;width:1899.5px;height:2.2px;background:#484848;"></div>
<span class="t" style="left:511.90px;top:1034.27px;font-size:24.8px;line-height:30px;color:#afafaf;transform:scaleX(0.9751);">00:01:39.353</span>
<span class="t" style="left:689.60px;top:1034.27px;font-size:24.8px;line-height:30px;color:#afafaf;transform:scaleX(1.0254);">Mouse click</span>
<span class="t" style="left:1322.00px;top:1034.27px;font-size:24.8px;line-height:30px;color:#afafaf;transform:scaleX(1.0096);">Up</span>
<div class="b" style="left:38.0px;top:1120.9px;width:1899.5px;height:2.2px;background:#484848;"></div>
<span class="t" style="left:511.90px;top:1083.89px;font-size:24.8px;line-height:30px;color:#afafaf;transform:scaleX(0.9751);">00:01:41.959</span>
<span class="t" style="left:689.60px;top:1083.89px;font-size:24.8px;line-height:30px;color:#afafaf;transform:scaleX(1.0254);">Mouse click</span>
<span class="t" style="left:1322.00px;top:1083.89px;font-size:24.8px;line-height:30px;color:#afafaf;transform:scaleX(1.0408);">Down</span>
<div class="b" style="left:38.0px;top:1170.5px;width:1899.5px;height:2.2px;background:#484848;"></div>
<span class="t" style="left:511.90px;top:1133.51px;font-size:24.8px;line-height:30px;color:#ffffff;transform:scaleX(0.9751);">00:01:42.169</span>
<span class="t" style="left:689.60px;top:1133.51px;font-size:24.8px;line-height:30px;color:#ffffff;transform:scaleX(1.0254);">Mouse click</span>
<span class="t" style="left:1322.00px;top:1133.51px;font-size:24.8px;line-height:30px;color:#ffffff;transform:scaleX(1.0096);">Up</span>
<div class="b" style="left:38.0px;top:1220.1px;width:1899.5px;height:2.2px;background:#484848;"></div>
<span class="t" style="left:511.90px;top:1183.13px;font-size:24.8px;line-height:30px;color:#afafaf;transform:scaleX(0.9751);">00:01:47.867</span>
<span class="t" style="left:689.60px;top:1183.13px;font-size:24.8px;line-height:30px;color:#afafaf;transform:scaleX(1.0254);">Mouse click</span>
<span class="t" style="left:1322.00px;top:1183.13px;font-size:24.8px;line-height:30px;color:#afafaf;transform:scaleX(1.0408);">Down</span>
<div class="b" style="left:38.0px;top:1269.8px;width:1899.5px;height:2.2px;background:#484848;"></div>
<span class="t" style="left:511.90px;top:1232.75px;font-size:24.8px;line-height:30px;color:#afafaf;transform:scaleX(0.9751);">00:01:48.056</span>
<span class="t" style="left:689.60px;top:1232.75px;font-size:24.8px;line-height:30px;color:#afafaf;transform:scaleX(1.0254);">Mouse click</span>
<span class="t" style="left:1322.00px;top:1232.75px;font-size:24.8px;line-height:30px;color:#afafaf;transform:scaleX(1.0096);">Up</span>
<div class="b" style="left:38.0px;top:1319.4px;width:1899.5px;height:2.2px;background:#484848;"></div>
<span class="t" style="left:511.90px;top:1282.37px;font-size:24.8px;line-height:30px;color:#afafaf;transform:scaleX(0.9751);">00:07:57.934</span>
<span class="t" style="left:689.60px;top:1282.37px;font-size:24.8px;line-height:30px;color:#afafaf;transform:scaleX(0.9749);">Key pressed</span>
<span class="t" style="left:1322.00px;top:1282.37px;font-size:24.8px;line-height:30px;color:#afafaf;transform:scaleX(1.0408);">Down</span>
<span class="t" style="left:511.90px;top:1331.99px;font-size:24.8px;line-height:30px;color:#afafaf;transform:scaleX(0.9751);">00:07:57.993</span>
<span class="t" style="left:689.60px;top:1331.99px;font-size:24.8px;line-height:30px;color:#afafaf;transform:scaleX(1.0300);">App lifecycle</span>
<span class="t" style="left:1322.00px;top:1331.99px;font-size:24.8px;line-height:30px;color:#afafaf;transform:scaleX(1.0239);">Terminate</span>
</div></div>
<div class="b" style="left:1921.5px;top:968.0px;width:16.0px;height:346.0px;background:#333333;"></div>
<div class="b" style="left:38.0px;top:972.0px;width:1899.5px;height:51.8px;background:transparent;border:2.2px solid #2877d4;"></div>
<div class="b" style="left:1955.2px;top:838.0px;width:543.8px;height:530.0px;background:#181818;border:4px solid #3c4044;"></div>
<span class="t" style="left:1986.00px;top:874.05px;font-size:24.4px;line-height:29px;color:#e2e2e2;transform:scaleX(1.0233);font-weight:bold;">Event Details</span>
<div class="b" style="left:1985.0px;top:931.8px;width:484.0px;height:2.0px;background:#5c5c5c;"></div>
<div class="b" style="left:1985.0px;top:1242.9px;width:484.0px;height:2.0px;background:#5c5c5c;"></div>
<span class="t" style="left:1985.60px;top:964.01px;font-size:24.5px;line-height:29px;color:#8d8d8d;transform:scaleX(0.9645);">Type:</span>
<span class="t" style="left:2054.30px;top:964.01px;font-size:24.5px;line-height:29px;color:#d6d6d6;transform:scaleX(1.0349);">Mouse click</span>
<span class="t" style="left:1987.00px;top:1003.01px;font-size:24.5px;line-height:29px;color:#8d8d8d;transform:scaleX(1.0278);">Button:</span>
<span class="t" style="left:2077.90px;top:1003.01px;font-size:24.5px;line-height:29px;color:#d6d6d6;">Left</span>
<span class="t" style="left:1985.80px;top:1041.91px;font-size:24.5px;line-height:29px;color:#8d8d8d;transform:scaleX(0.9607);">State:</span>
<span class="t" style="left:2057.80px;top:1041.91px;font-size:24.5px;line-height:29px;color:#d6d6d6;transform:scaleX(1.0328);">Down</span>
<span class="t" style="left:1986.40px;top:1081.01px;font-size:24.5px;line-height:29px;color:#8d8d8d;transform:scaleX(0.9974);">Position X:</span>
<span class="t" style="left:2113.50px;top:1081.01px;font-size:24.5px;line-height:29px;color:#d6d6d6;transform:scaleX(0.9788);">547</span>
<span class="t" style="left:1986.40px;top:1120.21px;font-size:24.5px;line-height:29px;color:#8d8d8d;transform:scaleX(1.0041);">Position Y:</span>
<span class="t" style="left:2111.40px;top:1120.21px;font-size:24.5px;line-height:29px;color:#d6d6d6;transform:scaleX(1.0082);">464</span>
<span class="t" style="left:1985.50px;top:1267.01px;font-size:24.5px;line-height:29px;color:#8d8d8d;transform:scaleX(1.0302);">Timestamp:</span>
<span class="t" style="left:2126.20px;top:1267.01px;font-size:24.5px;line-height:29px;color:#d6d6d6;transform:scaleX(0.9877);">00:01:39.159</span>
<span class="t" style="left:1986.50px;top:1306.21px;font-size:24.5px;line-height:29px;color:#8d8d8d;transform:scaleX(1.0258);">Date (d-m-Y):</span>
<span class="t" style="left:2149.20px;top:1306.21px;font-size:24.5px;line-height:29px;color:#d6d6d6;transform:scaleX(1.0591);">21-11-2024</span>
</body></html>
